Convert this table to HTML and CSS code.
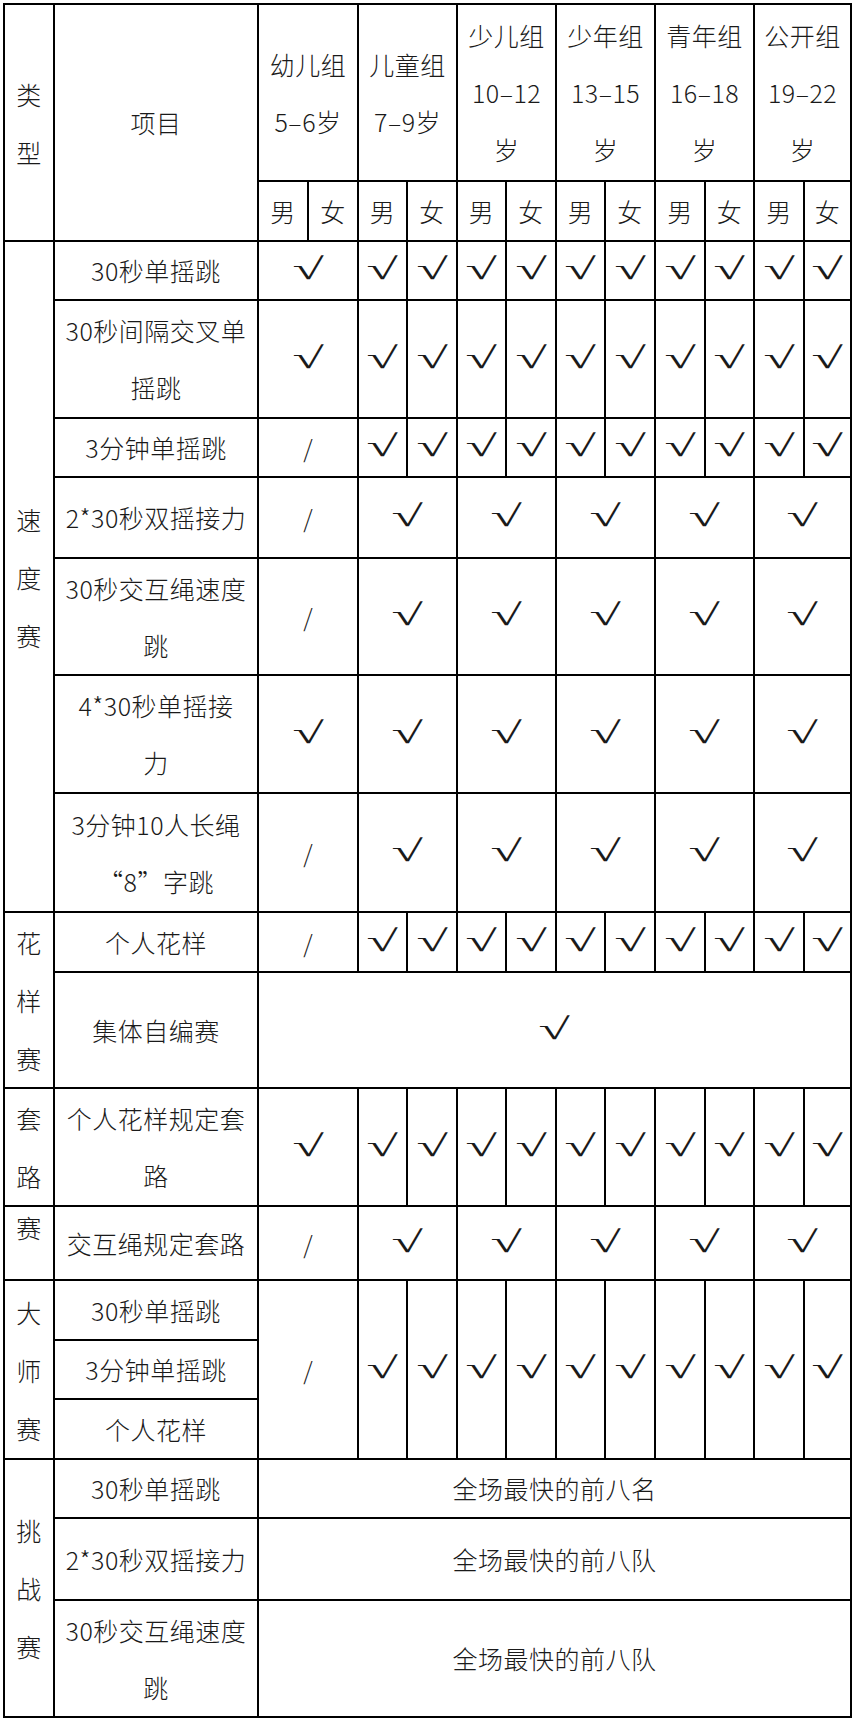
FILE: index.html
```html
<!DOCTYPE html>
<html lang="zh-CN">
<head>
<meta charset="utf-8">
<title>比赛项目设置</title>
<link rel="stylesheet" href="styles.css">
</head>
<body>
<table class="grid">
  <colgroup>
    <col class="c-type"><col class="c-item">
    <col class="c50"><col class="c50"><col class="c49"><col class="c50"><col class="c49"><col class="c50">
    <col class="c49"><col class="c50"><col class="c50"><col class="c49"><col class="c50"><col class="c47">
  </colgroup>
  <tbody>
    <tr class="r177">
      <td class="cat" rowspan="2">类<br>型</td>
      <td rowspan="2">项目</td>
      <td colspan="2">幼儿组<br>5–6岁</td>
      <td colspan="2">儿童组<br>7–9岁</td>
      <td colspan="2">少儿组<br>10–12<br>岁</td>
      <td colspan="2">少年组<br>13–15<br>岁</td>
      <td colspan="2">青年组<br>16–18<br>岁</td>
      <td colspan="2">公开组<br>19–22<br>岁</td>
    </tr>
    <tr class="r60">
      <td>男</td><td>女</td><td>男</td><td>女</td><td>男</td><td>女</td>
      <td>男</td><td>女</td><td>男</td><td>女</td><td>男</td><td>女</td>
    </tr>

    <tr class="r59">
      <td class="cat" rowspan="7">速<br>度<br>赛</td>
      <td>30秒单摇跳</td>
      <td colspan="2"><span class="ck">√</span></td>
      <td><span class="ck">√</span></td><td><span class="ck">√</span></td><td><span class="ck">√</span></td><td><span class="ck">√</span></td><td><span class="ck">√</span></td>
      <td><span class="ck">√</span></td><td><span class="ck">√</span></td><td><span class="ck">√</span></td><td><span class="ck">√</span></td><td><span class="ck">√</span></td>
    </tr>
    <tr class="r118">
      <td>30秒间隔交叉单<br>摇跳</td>
      <td colspan="2"><span class="ck">√</span></td>
      <td><span class="ck">√</span></td><td><span class="ck">√</span></td><td><span class="ck">√</span></td><td><span class="ck">√</span></td><td><span class="ck">√</span></td>
      <td><span class="ck">√</span></td><td><span class="ck">√</span></td><td><span class="ck">√</span></td><td><span class="ck">√</span></td><td><span class="ck">√</span></td>
    </tr>
    <tr class="r59">
      <td>3分钟单摇跳</td>
      <td class="na" colspan="2">/</td>
      <td><span class="ck">√</span></td><td><span class="ck">√</span></td><td><span class="ck">√</span></td><td><span class="ck">√</span></td><td><span class="ck">√</span></td>
      <td><span class="ck">√</span></td><td><span class="ck">√</span></td><td><span class="ck">√</span></td><td><span class="ck">√</span></td><td><span class="ck">√</span></td>
    </tr>
    <tr class="r81">
      <td>2*30秒双摇接力</td>
      <td class="na" colspan="2">/</td>
      <td colspan="2"><span class="ck">√</span></td><td colspan="2"><span class="ck">√</span></td><td colspan="2"><span class="ck">√</span></td>
      <td colspan="2"><span class="ck">√</span></td><td colspan="2"><span class="ck">√</span></td>
    </tr>
    <tr class="r117">
      <td>30秒交互绳速度<br>跳</td>
      <td class="na" colspan="2">/</td>
      <td colspan="2"><span class="ck">√</span></td><td colspan="2"><span class="ck">√</span></td><td colspan="2"><span class="ck">√</span></td>
      <td colspan="2"><span class="ck">√</span></td><td colspan="2"><span class="ck">√</span></td>
    </tr>
    <tr class="r118">
      <td>4*30秒单摇接<br>力</td>
      <td colspan="2"><span class="ck">√</span></td>
      <td colspan="2"><span class="ck">√</span></td><td colspan="2"><span class="ck">√</span></td><td colspan="2"><span class="ck">√</span></td>
      <td colspan="2"><span class="ck">√</span></td><td colspan="2"><span class="ck">√</span></td>
    </tr>
    <tr class="r119">
      <td>3分钟10人长绳<br>“8”字跳</td>
      <td class="na" colspan="2">/</td>
      <td colspan="2"><span class="ck">√</span></td><td colspan="2"><span class="ck">√</span></td><td colspan="2"><span class="ck">√</span></td>
      <td colspan="2"><span class="ck">√</span></td><td colspan="2"><span class="ck">√</span></td>
    </tr>

    <tr class="r60">
      <td class="cat" rowspan="2">花<br>样<br>赛</td>
      <td>个人花样</td>
      <td class="na" colspan="2">/</td>
      <td><span class="ck">√</span></td><td><span class="ck">√</span></td><td><span class="ck">√</span></td><td><span class="ck">√</span></td><td><span class="ck">√</span></td>
      <td><span class="ck">√</span></td><td><span class="ck">√</span></td><td><span class="ck">√</span></td><td><span class="ck">√</span></td><td><span class="ck">√</span></td>
    </tr>
    <tr class="r116">
      <td>集体自编赛</td>
      <td colspan="12"><span class="ck">√</span></td>
    </tr>

    <tr class="r115">
      <td class="cat">套<br>路</td>
      <td>个人花样规定套<br>路</td>
      <td colspan="2"><span class="ck">√</span></td>
      <td><span class="ck">√</span></td><td><span class="ck">√</span></td><td><span class="ck">√</span></td><td><span class="ck">√</span></td><td><span class="ck">√</span></td>
      <td><span class="ck">√</span></td><td><span class="ck">√</span></td><td><span class="ck">√</span></td><td><span class="ck">√</span></td><td><span class="ck">√</span></td>
    </tr>
    <tr class="r74">
      <td class="cat cat-top">赛</td>
      <td>交互绳规定套路</td>
      <td class="na" colspan="2">/</td>
      <td colspan="2"><span class="ck">√</span></td><td colspan="2"><span class="ck">√</span></td><td colspan="2"><span class="ck">√</span></td>
      <td colspan="2"><span class="ck">√</span></td><td colspan="2"><span class="ck">√</span></td>
    </tr>

    <tr class="r60">
      <td class="cat" rowspan="3">大<br>师<br>赛</td>
      <td>30秒单摇跳</td>
      <td class="na" colspan="2" rowspan="3">/</td>
      <td rowspan="3"><span class="ck">√</span></td><td rowspan="3"><span class="ck">√</span></td><td rowspan="3"><span class="ck">√</span></td>
      <td rowspan="3"><span class="ck">√</span></td><td rowspan="3"><span class="ck">√</span></td><td rowspan="3"><span class="ck">√</span></td>
      <td rowspan="3"><span class="ck">√</span></td><td rowspan="3"><span class="ck">√</span></td><td rowspan="3"><span class="ck">√</span></td>
      <td rowspan="3"><span class="ck">√</span></td>
    </tr>
    <tr class="r59">
      <td>3分钟单摇跳</td>
    </tr>
    <tr class="r60">
      <td>个人花样</td>
    </tr>

    <tr class="r58">
      <td class="cat" rowspan="3">挑<br>战<br>赛</td>
      <td>30秒单摇跳</td>
      <td colspan="12">全场最快的前八名</td>
    </tr>
    <tr class="r82">
      <td>2*30秒双摇接力</td>
      <td colspan="12">全场最快的前八队</td>
    </tr>
    <tr class="r117">
      <td>30秒交互绳速度<br>跳</td>
      <td colspan="12">全场最快的前八队</td>
    </tr>
  </tbody>
</table>
</body>
</html>
```

FILE: styles.css
```css
html, body {
  margin: 0;
  background: #ffffff;
}

body {
  padding: 3px;
  font-family: "Noto Sans CJK SC", "Noto Sans", sans-serif;
  font-weight: 300;
  color: #1a1a1a;
}

.grid {
  border-collapse: collapse;
  table-layout: fixed;
  width: 849px;
  font-size: 25px;
  line-height: 57px;
  letter-spacing: 0.5px;
}

.grid td {
  border: 2px solid #000000;
  padding: 0;
  text-align: center;
  vertical-align: middle;
  white-space: nowrap;
}

.c-type { width: 50px; }
.c-item { width: 204px; }
.c50 { width: 50px; }
.c49 { width: 49px; }
.c47 { width: 47px; }

.cat { line-height: 58px; }
.grid td.cat-top {
  vertical-align: top;
  line-height: 40px;
}

.ck {
  display: inline-block;
  font-family: "Liberation Serif", serif;
  font-weight: 400;
  font-size: 30px;
  line-height: 30px;
  letter-spacing: 0;
  color: #1a1a1a;
  transform: scaleX(1.9);
  transform-origin: center;
  position: relative;
  top: -2px;
}

.na {
  font-size: 24px;
  letter-spacing: 0;
}

.r177 { height: 177px; }
.r119 { height: 119px; }
.r118 { height: 118px; }
.r117 { height: 117px; }
.r116 { height: 116px; }
.r115 { height: 115px; }
.r82 { height: 82px; }
.r81 { height: 81px; }
.r74 { height: 74px; }
.r60 { height: 60px; }
.r59 { height: 59px; }
.r58 { height: 58px; }
```
